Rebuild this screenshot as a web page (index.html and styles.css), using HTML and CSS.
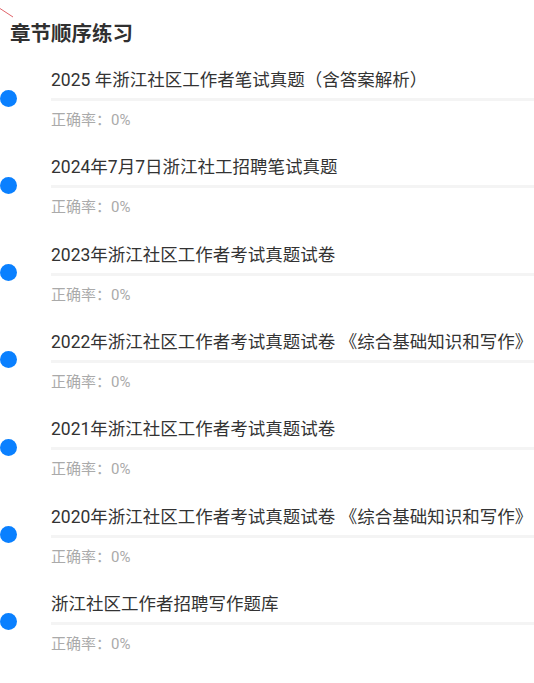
FILE: index.html
```html
<!DOCTYPE html>
<html lang="zh-CN">
<head>
    <meta charset="UTF-8">
    <meta name="viewport" content="width=device-width, initial-scale=1.0">
    <title>章节顺序练习</title>
    <link rel="stylesheet" href="styles.css">
</head>
<body>
    <svg class="corner" width="20" height="24" viewBox="0 0 20 24">
        <line x1="0" y1="8.5" x2="13" y2="17" stroke="#e0646a" stroke-width="1"/>
    </svg>

    <h2 class="titulo">章节顺序练习</h2>

    <ul class="lista">
        <li class="capitulo">
            <span class="ponto"></span>
            <div class="info">
                <p class="nome">2025 年浙江社区工作者笔试真题（含答案解析）</p>
                <div class="barra"></div>
                <p class="taxa">正确率：0%</p>
            </div>
        </li>
        <li class="capitulo">
            <span class="ponto"></span>
            <div class="info">
                <p class="nome">2024年7月7日浙江社工招聘笔试真题</p>
                <div class="barra"></div>
                <p class="taxa">正确率：0%</p>
            </div>
        </li>
        <li class="capitulo">
            <span class="ponto"></span>
            <div class="info">
                <p class="nome">2023年浙江社区工作者考试真题试卷</p>
                <div class="barra"></div>
                <p class="taxa">正确率：0%</p>
            </div>
        </li>
        <li class="capitulo">
            <span class="ponto"></span>
            <div class="info">
                <p class="nome">2022年浙江社区工作者考试真题试卷 《综合基础知识和写作》</p>
                <div class="barra"></div>
                <p class="taxa">正确率：0%</p>
            </div>
        </li>
        <li class="capitulo">
            <span class="ponto"></span>
            <div class="info">
                <p class="nome">2021年浙江社区工作者考试真题试卷</p>
                <div class="barra"></div>
                <p class="taxa">正确率：0%</p>
            </div>
        </li>
        <li class="capitulo">
            <span class="ponto"></span>
            <div class="info">
                <p class="nome">2020年浙江社区工作者考试真题试卷 《综合基础知识和写作》</p>
                <div class="barra"></div>
                <p class="taxa">正确率：0%</p>
            </div>
        </li>
        <li class="capitulo">
            <span class="ponto"></span>
            <div class="info">
                <p class="nome">浙江社区工作者招聘写作题库</p>
                <div class="barra"></div>
                <p class="taxa">正确率：0%</p>
            </div>
        </li>
    </ul>
</body>
</html>
```

FILE: styles.css
```css
:root {
    --cor-texto: #333333;
    --cor-cinza: #aaaaaa;
    --cor-barra: #f4f4f4;
    --cor-ponto: #0a80ff;
}

body {
    font-family: 'Roboto', 'Noto Sans CJK SC', sans-serif;
    background-color: #ffffff;
    color: var(--cor-texto);
    margin: 0;
    padding: 0;
}

.corner {
    position: absolute;
    top: 0;
    left: 0;
}

.titulo {
    font-size: 20.5px;
    font-weight: bold;
    line-height: 28px;
    margin: 0;
    padding: 20px 0 0 10px;
    color: #303030;
}

.lista {
    list-style: none;
    margin: 0;
    padding: 20px 0 0 0;
}

.capitulo {
    display: flex;
    align-items: flex-start;
    margin-bottom: 25.33px;
}

.ponto {
    flex: none;
    width: 17px;
    height: 17px;
    margin-top: 21.5px;
    border-radius: 50%;
    background-color: var(--cor-ponto);
}

.info {
    flex: 1;
    margin-left: 34px;
}

.nome {
    margin: 0;
    font-size: 17.5px;
    line-height: 24px;
    white-space: nowrap;
}

.barra {
    height: 3px;
    margin-top: 6px;
    background-color: var(--cor-barra);
}

.taxa {
    margin: 9px 0 0 0;
    font-size: 15px;
    line-height: 20px;
    color: var(--cor-cinza);
}
```
